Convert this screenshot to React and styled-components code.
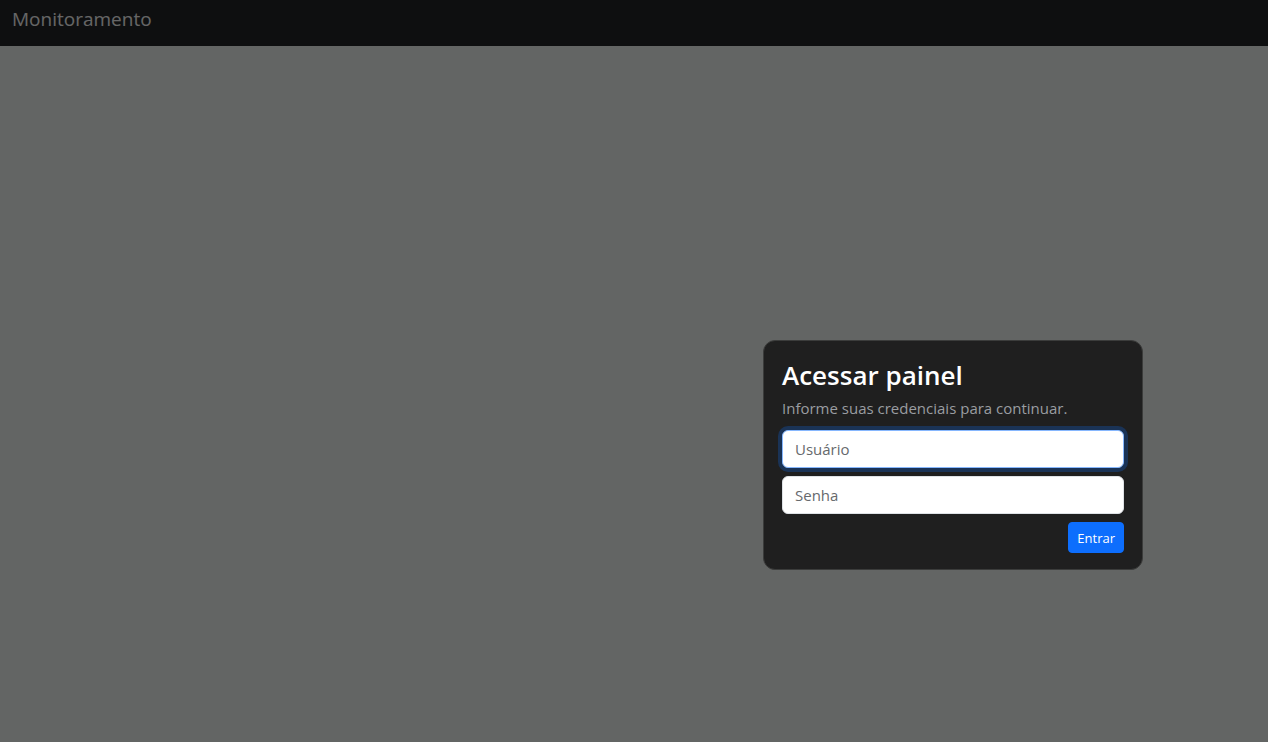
import React from "react";
import styled, { createGlobalStyle } from "styled-components";

const GlobalStyle = createGlobalStyle`
  *, *::before, *::after { box-sizing: border-box; }
  body {
    margin: 0;
    background: #f8fcf9;
    color: #ffffff;
    font-family: "Segoe UI", "Open Sans", "Noto Sans", sans-serif;
    font-size: 15px;
    line-height: 24px;
  }
`;

const Navbar = styled.header`
  display: flex;
  align-items: flex-start;
  height: 46px;
  padding: 4px 12px;
  background: #232629;
`;

const Brand = styled.a`
  color: #ffffff;
  font-size: 19px;
  line-height: 30px;
  text-decoration: none;
`;

const Backdrop = styled.main`
  position: fixed;
  inset: 0;
  display: flex;
  align-items: flex-end;
  justify-content: flex-end;
  padding: 16px 125px 172px 16px;
  background: rgba(0, 0, 0, 0.6);
`;

const Card = styled.form`
  display: flex;
  flex-direction: column;
  gap: 8px;
  width: 100%;
  max-width: 380px;
  padding: 16px 18px;
  background: #1f1f1f;
  border: 1px solid #3b3c3b;
  border-radius: 12px;
`;

const Intro = styled.div`
  display: flex;
  flex-direction: column;
  gap: 3px;
  padding-bottom: 2px;
`;

const Title = styled.h1`
  margin: 0;
  font-size: 26px;
  font-weight: 600;
  line-height: 36px;
`;

const Hint = styled.p`
  margin: 0;
  color: #9a9da1;
`;

const Field = styled.input`
  width: 100%;
  height: 38px;
  padding: 6px 12px;
  color: #212529;
  caret-color: transparent;
  font: inherit;
  background: #ffffff;
  border: 1px solid #dee2e6;
  border-radius: 6px;
  outline: 0;

  &::placeholder { color: #66696c; opacity: 1; }
  &:focus {
    border-color: #86b7fe;
    box-shadow: 0 0 0 4px rgba(13, 110, 253, 0.25);
  }
`;

const Actions = styled.div`
  display: flex;
  justify-content: flex-end;
`;

const SubmitButton = styled.button`
  height: 31px;
  padding: 4px 8px;
  color: #ffffff;
  font: inherit;
  font-size: 13px;
  line-height: 22px;
  background: #0d6efd;
  border: 1px solid #0d6efd;
  border-radius: 4px;
  cursor: pointer;
`;

export default function App() {
  return (
    <>
      <GlobalStyle />
      <Navbar>
        <Brand href="#">Monitoramento</Brand>
      </Navbar>
      <Backdrop>
        <Card onSubmit={(event) => event.preventDefault()}>
          <Intro>
            <Title>Acessar painel</Title>
            <Hint>Informe suas credenciais para continuar.</Hint>
          </Intro>
          <Field type="text" placeholder="Usuário" aria-label="Usuário" autoComplete="username" autoFocus />
          <Field type="password" placeholder="Senha" aria-label="Senha" autoComplete="current-password" />
          <Actions>
            <SubmitButton type="submit">Entrar</SubmitButton>
          </Actions>
        </Card>
      </Backdrop>
    </>
  );
}
